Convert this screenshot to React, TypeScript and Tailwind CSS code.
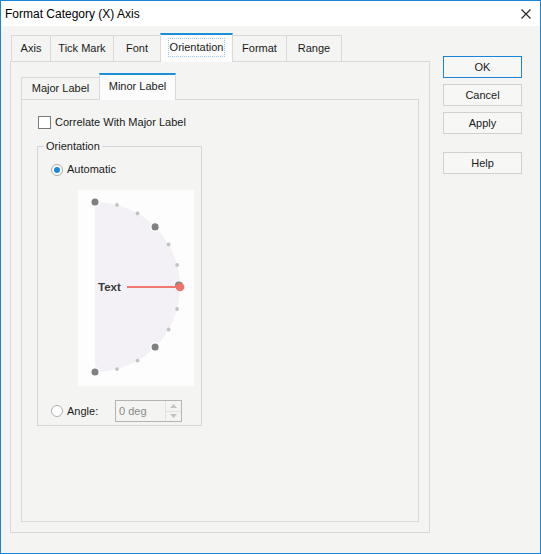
const TABS = [
  { label: 'Axis', w: 'w-[39px]' },
  { label: 'Tick Mark', w: 'w-[63px]' },
  { label: 'Font', w: 'w-[47px]' },
  { label: 'Orientation', w: 'w-[73px]', active: true },
  { label: 'Format', w: 'w-[53px]' },
  { label: 'Range', w: 'w-[56px]' },
]

const BUTTONS = [
  { label: 'OK', cls: 'mt-0 border-[#1a84d6]' },
  { label: 'Cancel', cls: 'mt-[6px] border-[#d0d0d0]' },
  { label: 'Apply', cls: 'mt-[6px] border-[#d0d0d0]' },
  { label: 'Help', cls: 'mt-[18px] border-[#d0d0d0]' },
]

function Dial() {
  const cx = 17
  const cy = 97
  const r = 85
  const pt = (deg: number) => {
    const a = (deg * Math.PI) / 180
    return { x: cx + r * Math.cos(a), y: cy - r * Math.sin(a) }
  }
  const big = [90, 45, -45, -90]
  const small = [75, 60, 30, 15, -15, -30, -60, -75]

  return (
    <svg width="116" height="196" viewBox="0 0 116 196">
      <path d={`M${cx},${cy - r} A${r},${r} 0 0 1 ${cx},${cy + r} Z`} fill="#f3f1f5" />
      {small.map((d) => {
        const p = pt(d)
        return <circle key={d} cx={p.x} cy={p.y} r="1.9" fill="#c2c2c2" />
      })}
      {big.map((d) => {
        const p = pt(d)
        return <circle key={d} cx={p.x} cy={p.y} r="4.3" fill="#808080" stroke="#ffffff" strokeWidth="1.5" />
      })}
      <circle cx="101" cy="95.5" r="4" fill="#808080" />
      <line x1="49" y1="97" x2="101" y2="97" stroke="#f07a70" strokeWidth="2" />
      <circle cx="102" cy="97" r="4.3" fill="#f0736b" />
      <text x="20" y="101" fontSize="11.5" fontWeight="600" fill="#3a3a3a" fontFamily="'Liberation Sans', Arial, sans-serif">
        Text
      </text>
    </svg>
  )
}

export default function App() {
  return (
    <div
      className="flex h-[554px] w-[541px] flex-col border border-[#1a84d6] bg-[#f4f5f2] text-[11px] text-[#1a1a1a]"
      style={{ fontFamily: "'Liberation Sans', Arial, sans-serif" }}
    >
      {/* Title bar */}
      <div className="flex h-[25px] items-center justify-between bg-white pl-[4px] pr-[9px]">
        <span className="text-[12px] text-black">Format Category (X) Axis</span>
        <svg width="10" height="10" viewBox="0 0 10 10">
          <path d="M0.5 0.5 L9.5 9.5 M9.5 0.5 L0.5 9.5" stroke="#222" strokeWidth="1.1" />
        </svg>
      </div>

      <div className="flex flex-1">
        {/* Left: tab control */}
        <div className="ml-[9px] mt-[7px] flex w-[420px] flex-col">
          <div className="flex h-[28px] items-end pl-[1px]">
            {TABS.map((t, i) =>
              t.active ? (
                <div
                  key={t.label}
                  className={`${t.w} relative z-10 -mb-px flex h-[29px] items-center justify-center border-x border-t-2 border-x-[#d9d9d9] border-t-[#1a8fd8] bg-[#fbfcfb] pb-[2px]`}
                >
                  <span className="px-[1px] outline outline-1 outline-dotted outline-[#9cc8ec]">{t.label}</span>
                </div>
              ) : (
                <div
                  key={t.label}
                  className={`${t.w} flex h-[26px] items-center justify-center border-t border-[#d9d9d9] ${
                    i === TABS.length - 1 ? 'border-x' : 'border-l'
                  } ${TABS[i - 1]?.active ? 'border-l-0' : ''}`}
                >
                  {t.label}
                </div>
              ),
            )}
          </div>

          <div className="flex h-[472px] flex-col border border-[#d9d9d9] px-[10px] pb-[10px] pt-[11px]">
            {/* Inner tabs */}
            <div className="flex h-[26px] items-end">
              <div className="flex h-[22px] w-[78px] items-center justify-center border-l border-t border-[#d9d9d9]">
                Major Label
              </div>
              <div className="relative z-10 -mb-px flex h-[27px] w-[77px] items-center justify-center border-x border-t-2 border-x-[#d9d9d9] border-t-[#1a8fd8] bg-[#fbfcfb] pb-[3px]">
                Minor Label
              </div>
            </div>

            <div className="flex flex-1 flex-col border border-[#d9d9d9] pl-[15px] pt-[16px]">
              <label className="flex items-center gap-[4px]">
                <span className="ml-[1px] h-[13px] w-[13px] border border-[#7a7a7a] bg-white" />
                <span className="leading-[13px]">Correlate With Major Label</span>
              </label>

              {/* Group box */}
              <div className="relative mt-[17px] h-[280px] w-[165px] border border-[#d6d6d6] pl-[13px] pt-[16px]">
                <span className="absolute -top-[9px] left-[6px] bg-[#f4f5f2] px-[2px] leading-[16px]">Orientation</span>

                <div className="flex items-center gap-[4px]">
                  <span className="flex h-[12px] w-[12px] items-center justify-center rounded-full border border-[#a8a8a8] bg-white">
                    <span className="h-[6px] w-[6px] rounded-full bg-[#1a8ad8]" />
                  </span>
                  <span className="leading-[13px]">Automatic</span>
                </div>

                <div className="ml-[27px] mt-[14px] h-[196px] w-[116px] bg-[#fcfdfc]">
                  <Dial />
                </div>

                <div className="mt-[14px] flex items-center">
                  <span className="h-[12px] w-[12px] rounded-full border border-[#b0b0b0] bg-white" />
                  <span className="ml-[4px] w-[48px] leading-[13px]">Angle:</span>
                  <div className="flex h-[22px] w-[67px] items-stretch border border-[#b4b4b4] bg-[#f4f5f2]">
                    <span className="flex flex-1 items-center pl-[3px] text-[#8a8a8a]">0 deg</span>
                    <div className="flex w-[16px] flex-col border-l border-[#e2e2e2]">
                      <span className="flex flex-1 items-center justify-center border-b border-[#e2e2e2]">
                        <svg width="7" height="4" viewBox="0 0 7 4">
                          <path d="M0 4 L3.5 0 L7 4 Z" fill="#c4c4c4" />
                        </svg>
                      </span>
                      <span className="flex flex-1 items-center justify-center">
                        <svg width="7" height="4" viewBox="0 0 7 4">
                          <path d="M0 0 L3.5 4 L7 0 Z" fill="#c4c4c4" />
                        </svg>
                      </span>
                    </div>
                  </div>
                </div>
              </div>
            </div>
          </div>
        </div>

        {/* Right: buttons */}
        <div className="ml-[13px] mt-[30px] flex flex-col">
          {BUTTONS.map((b) => (
            <button
              key={b.label}
              className={`${b.cls} h-[22px] w-[79px] border bg-[#f7f8f6] text-[11px] leading-none text-[#1a1a1a]`}
            >
              {b.label}
            </button>
          ))}
        </div>
      </div>
    </div>
  )
}
